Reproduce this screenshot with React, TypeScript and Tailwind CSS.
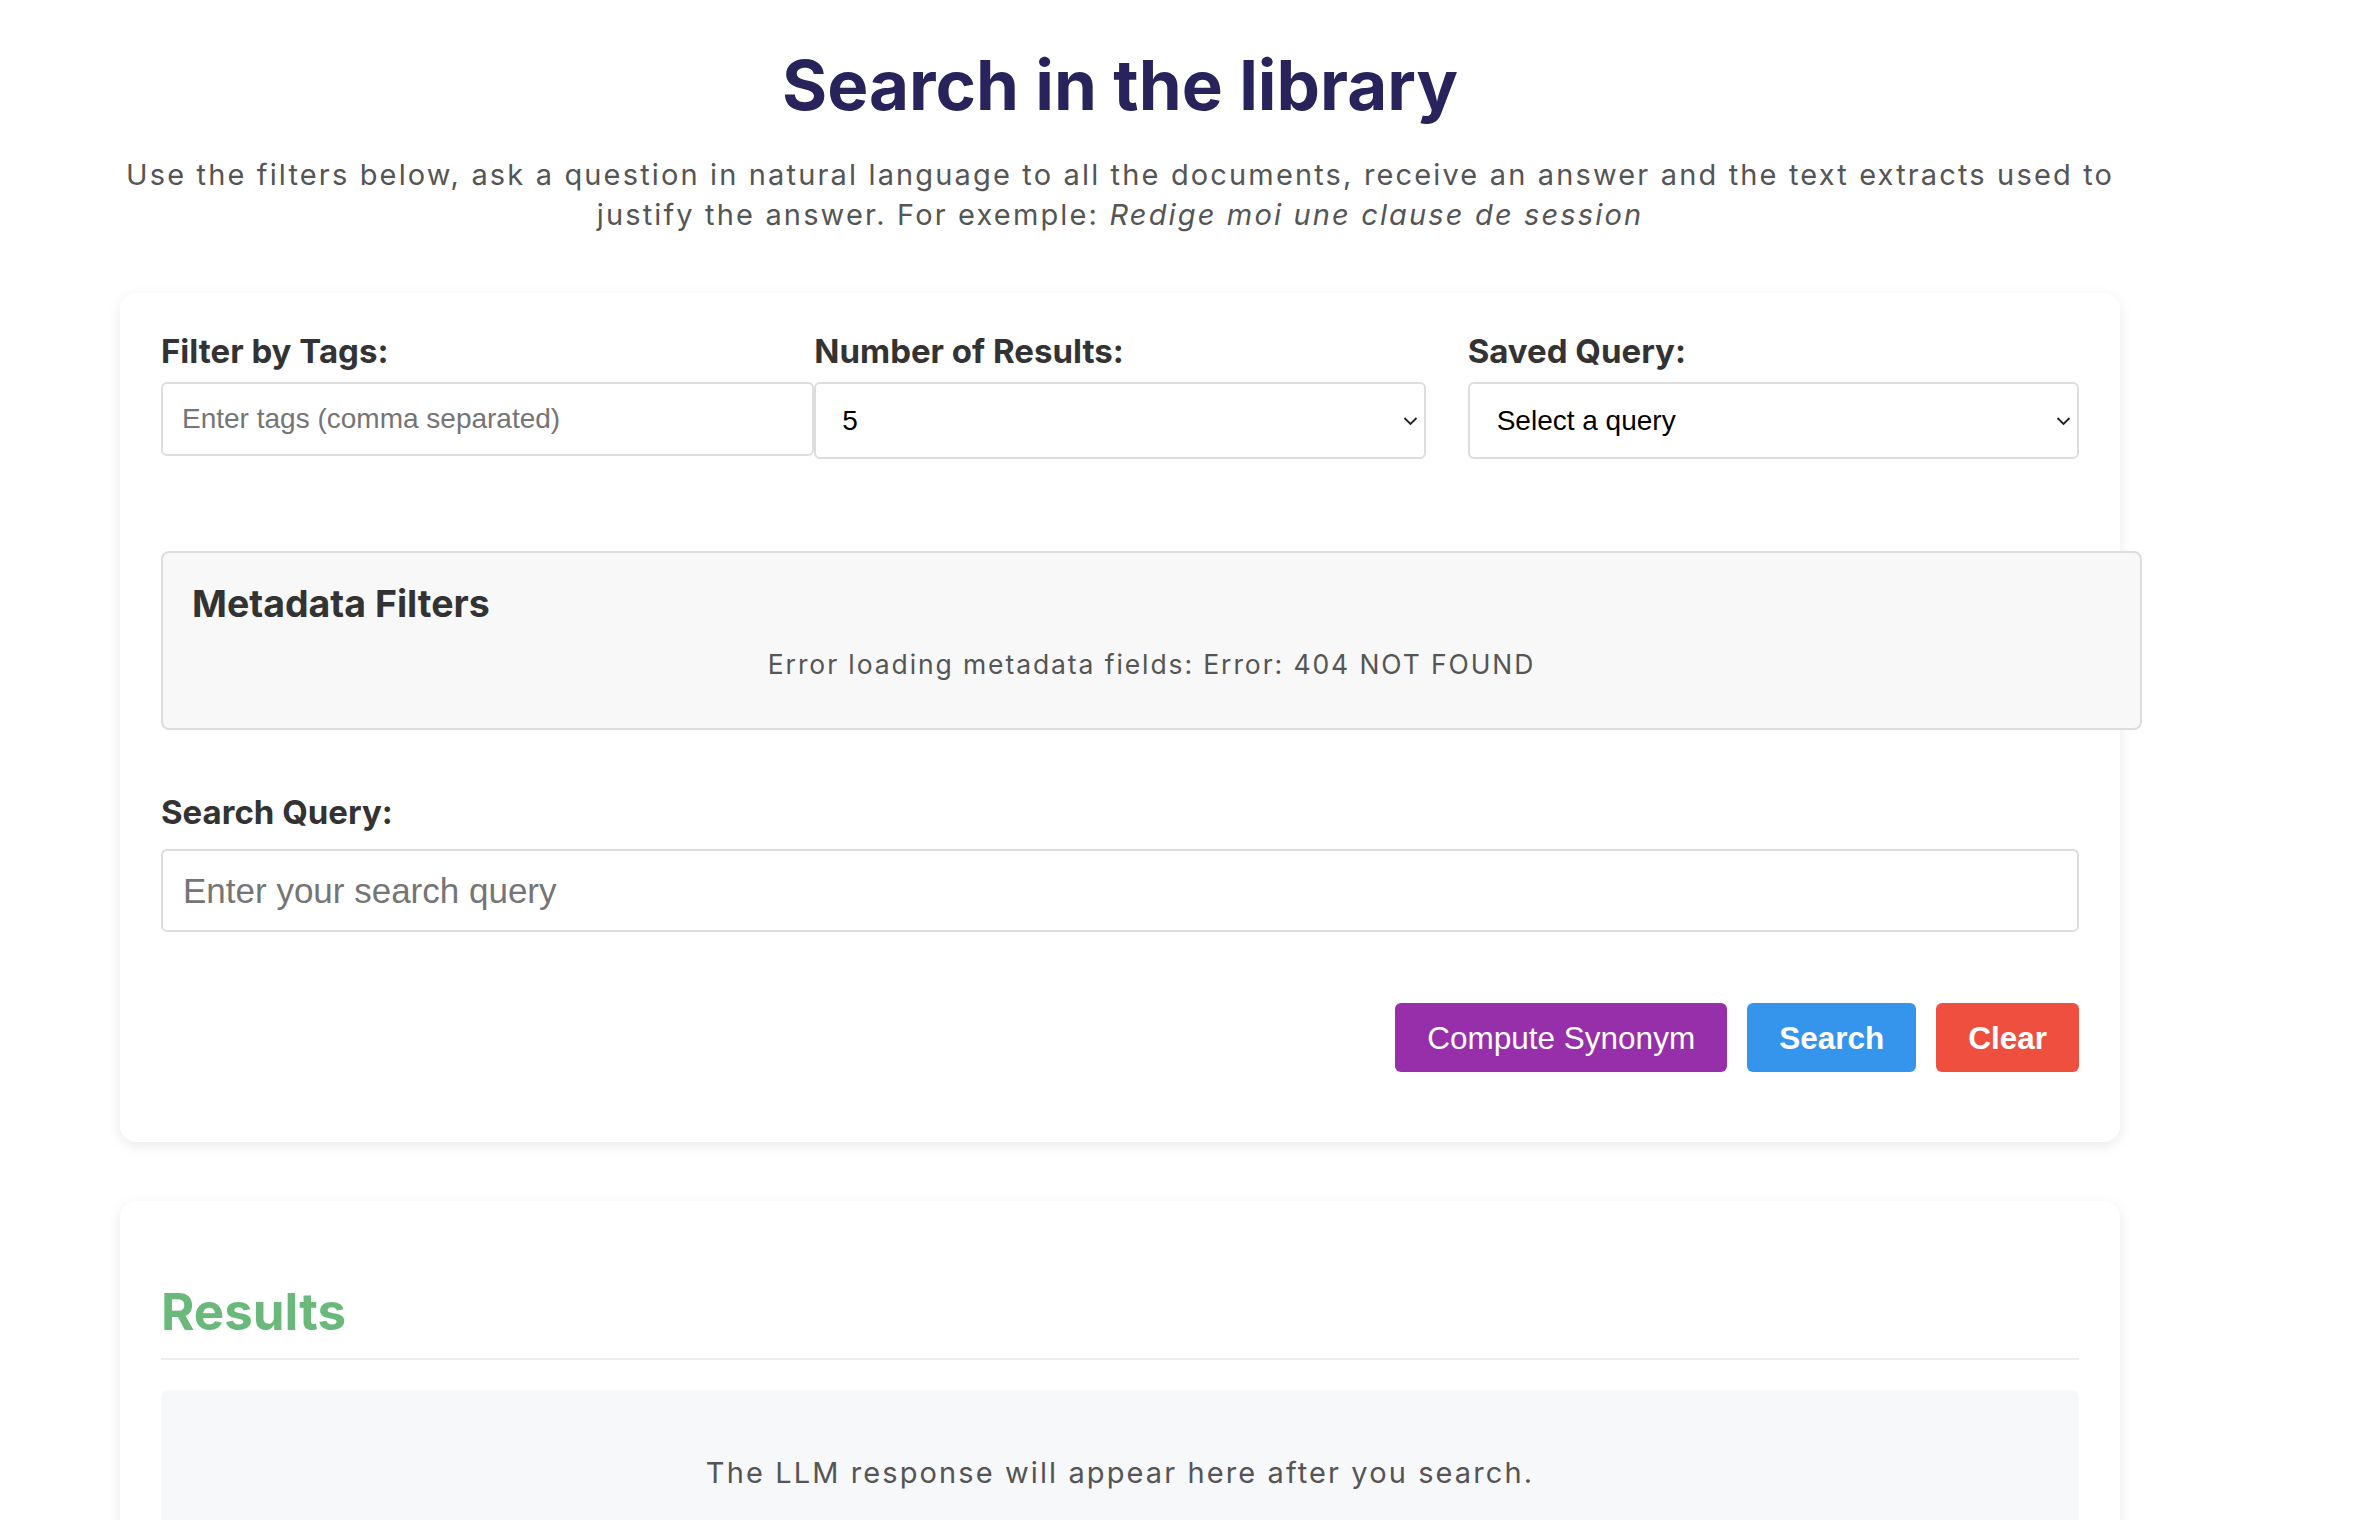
import React from "react";

function Chevron() {
  return (
    <svg
      width="15"
      height="9"
      viewBox="0 0 15 9"
      className="pointer-events-none absolute right-[8px] top-1/2 -translate-y-1/2"
    >
      <path d="M1.5 1.5 7.5 7.5l6-6" fill="none" stroke="#222" strokeWidth="1.8" />
    </svg>
  );
}

function Label({ children }: { children: React.ReactNode }) {
  return (
    <label className="block text-[33px] leading-[40px] font-bold text-[#333]">
      {children}
    </label>
  );
}

export default function App() {
  return (
    <div className="min-h-screen bg-white font-['Inter',sans-serif]">
      <div className="ml-[120px] w-[2000px] pb-20">
        <h1 className="mt-[43px] text-center text-[69px] leading-[84px] font-bold text-[#29235c]">
          Search in the library
        </h1>
        <p className="-mx-[60px] mt-[28px] text-center text-[29px] leading-[40px] tracking-[2.15px] whitespace-nowrap text-[#555]">
          Use the filters below, ask a question in natural language to all the documents, receive an answer and the text extracts used to
          <br />
          justify the answer. For exemple: <em>Redige moi une clause de session</em>
        </p>

        {/* search form */}
        <div className="mt-[58px] rounded-[16px] bg-white px-[41px] pt-[38px] pb-[70px] shadow-[0_4px_14px_rgba(0,0,0,0.09)]">
          <div className="grid grid-cols-3 gap-x-[42px]">
            <div>
              <Label>Filter by Tags:</Label>
              <input
                type="text"
                placeholder="Enter tags (comma separated)"
                className="mt-[11px] h-[74px] w-[653px] rounded-[6px] border-2 border-[#ddd] bg-white px-[19px] font-['Liberation_Sans',Arial,sans-serif] text-[28px] text-black placeholder:text-[#757575] outline-none"
              />
            </div>
            <div>
              <Label>Number of Results:</Label>
              <div className="relative mt-[11px]">
                <select
                  defaultValue="5"
                  className="h-[77px] w-full appearance-none rounded-[6px] border-2 border-[#ddd] bg-white px-[26px] font-['Liberation_Sans',Arial,sans-serif] text-[28px] text-black outline-none"
                >
                  <option value="3">3</option>
                  <option value="5">5</option>
                  <option value="10">10</option>
                </select>
                <Chevron />
              </div>
            </div>
            <div>
              <Label>Saved Query:</Label>
              <div className="relative mt-[11px]">
                <select
                  defaultValue=""
                  className="h-[77px] w-full appearance-none rounded-[6px] border-2 border-[#ddd] bg-white px-[27px] font-['Liberation_Sans',Arial,sans-serif] text-[28px] text-black outline-none"
                >
                  <option value="">Select a query</option>
                </select>
                <Chevron />
              </div>
            </div>
          </div>

          <div className="mt-[92px] w-[1981px] rounded-[8px] border-2 border-[#ddd] bg-[#f8f8f8] px-[29px] pt-[28px] pb-[44px]">
            <h3 className="text-[37.5px] leading-[45px] font-bold text-[#333]">Metadata Filters</h3>
            <p className="mt-[18px] text-center text-[26.5px] leading-[40px] tracking-[1.9px] text-[#555]">
              Error loading metadata fields: Error: 404 NOT FOUND
            </p>
          </div>

          <div className="mt-[62px]">
            <Label>Search Query:</Label>
            <input
              type="text"
              placeholder="Enter your search query"
              className="mt-[17px] h-[83px] w-full rounded-[6px] border-2 border-[#ddd] bg-white px-[20px] font-['Liberation_Sans',Arial,sans-serif] text-[35px] text-black placeholder:text-[#757575] outline-none"
            />
          </div>

          <div className="mt-[71px] flex justify-end gap-[20px] font-['Liberation_Sans',Arial,sans-serif] text-[31.5px] leading-[36px] text-white">
            <button className="h-[69px] rounded-[6px] bg-[#962fa9] px-[32px]">Compute Synonym</button>
            <button className="h-[69px] rounded-[6px] bg-[#3595ed] px-[32px] font-bold">Search</button>
            <button className="h-[69px] rounded-[6px] bg-[#ef4f3f] px-[32px] font-bold">Clear</button>
          </div>
        </div>

        {/* results */}
        <div className="mt-[59px] rounded-[16px] bg-white px-[41px] pt-[80px] pb-[60px] shadow-[0_4px_14px_rgba(0,0,0,0.09)]">
          <h2 className="text-[51px] leading-[62px] font-bold text-[#6ab97b]">Results</h2>
          <div className="mt-[15px] h-[2px] bg-[#eee]" />
          <div className="mt-[30px] rounded-[8px] bg-[#f7f8fa] pt-[63px] pb-[61px]">
            <p className="text-center text-[29px] leading-[40px] tracking-[2.1px] text-[#555]">
              The LLM response will appear here after you search.
            </p>
          </div>
        </div>
      </div>
    </div>
  );
}
